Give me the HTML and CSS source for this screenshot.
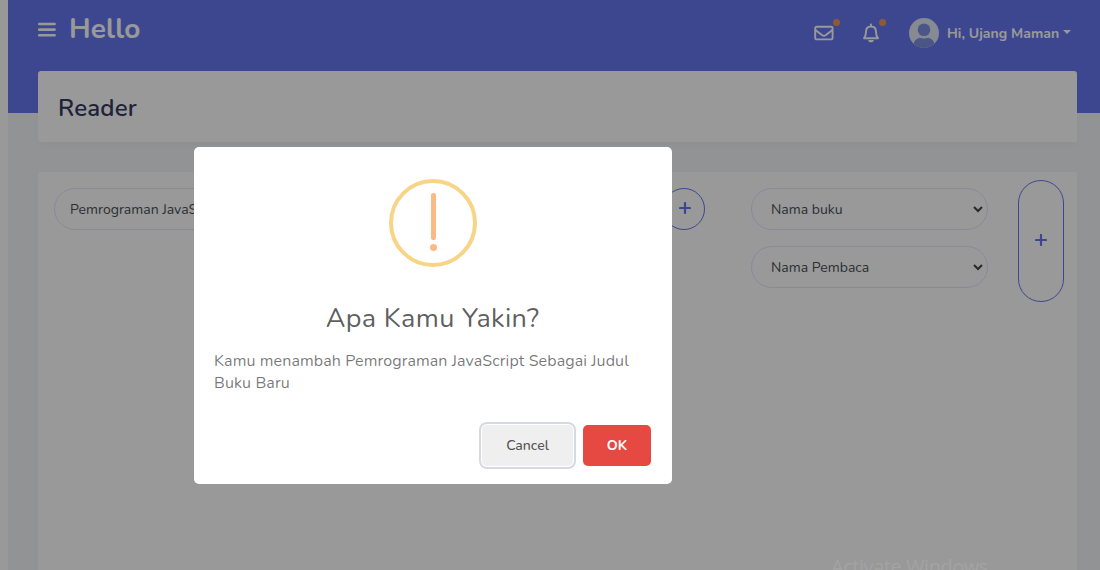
FILE: index.html
```html
<!DOCTYPE html>
<html lang="id">
<head>
<meta charset="utf-8">
<title>Reader</title>
<link rel="stylesheet" href="styles.css">
</head>
<body>
<div class="app">
  <header class="navbar">
    <svg class="menu" viewBox="0 0 18 16" width="18" height="16"><path d="M1.200 2h15.400M1.200 7.600h15.400M1.200 13.200h15.400" stroke="#fff" stroke-width="2.600" stroke-linecap="round"/></svg>
    <h1 class="brand"><span>Hello</span></h1>
    <nav class="tools">
      <span class="tool mail">
        <svg viewBox="0 0 20 16" width="20" height="16" fill="none" stroke="#fff" stroke-width="1.9" stroke-linejoin="round"><rect x="1.200" y="1.800" width="17.400" height="12.600" rx="1.300"/><path d="M1.400 5l6.500 5.100q2 1.500 4 0L18.400 5"/></svg>
        <i class="dot"></i>
      </span>
      <span class="tool bell">
        <svg viewBox="0 0 18 20" width="18" height="20"><path d="M2 15.200h14c-1.600-1.600-2-3.200-2-6.400 0-3.200-1.900-5.300-5-5.300S4 5.600 4 8.800c0 3.200-.4 4.800-2 6.400z" fill="none" stroke="#fff" stroke-width="1.900" stroke-linejoin="round"/><path d="M9 1.600v1.600" stroke="#fff" stroke-width="2" stroke-linecap="round"/><path d="M6.300 17h5.400a2.700 2.300 0 0 1-5.400 0z" fill="#fff"/></svg>
        <i class="dot"></i>
      </span>
      <svg class="avatar" viewBox="0 0 30 30" width="30" height="30"><defs><clipPath id="round"><circle cx="15" cy="15" r="15"/></clipPath></defs><g clip-path="url(#round)"><path fill="#dfe7f6" d="M0 0h30v30H0z"/><path fill="#7a8fe0" d="M4.500 30v-4q1-5 6-6.300 4.500 1.600 9 0 5 1.300 6 6.300v4z"/><circle cx="15" cy="11.700" r="7.500" fill="#dfe7f6"/><circle cx="15" cy="11.700" r="6.300" fill="#7a8fe0"/></g></svg>
      <span class="user">Hi, Ujang Maman</span>
      <i class="caret"></i>
    </nav>
  </header>
  <main class="content">
    <section class="card heading"><h2>Reader</h2></section>
    <section class="card forms">
      <div class="field title-field">Pemrograman JavaScript</div>
      <div class="add add-title"><svg viewBox="0 0 12 12" width="12" height="12"><path d="M6 1v10M1 6h10" stroke="#6777ef" stroke-width="2.200" stroke-linecap="round"/></svg></div>
      <div class="selects">
        <div class="field select"><span class="book">Nama buku</span><svg viewBox="0 0 10 7" width="10" height="7"><path d="M1 1l4 4 4-4" fill="none" stroke="#444" stroke-width="2"/></svg></div>
        <div class="field select"><span class="person">Nama Pembaca</span><svg viewBox="0 0 10 7" width="10" height="7"><path d="M1 1l4 4 4-4" fill="none" stroke="#444" stroke-width="2"/></svg></div>
      </div>
      <div class="add add-reader"><svg viewBox="0 0 12 12" width="12" height="12"><path d="M6 1v10M1 6h10" stroke="#6777ef" stroke-width="2.200" stroke-linecap="round"/></svg></div>
    </section>
  </main>
</div>
<div class="overlay">
  <div class="modal">
    <div class="warning"><i class="bar"></i><i class="point"></i></div>
    <h3>Apa Kamu Yakin?</h3>
    <p>Kamu menambah Pemrograman JavaScript Sebagai Judul<br>Buku Baru</p>
    <div class="actions"><button class="cancel">Cancel</button><button class="ok">OK</button></div>
  </div>
</div>
<div class="watermark">Activate Windows</div>
</body>
</html>
```
FILE: styles.css
```css
* { box-sizing: border-box; }
body { margin: 0; height: 570px; overflow: hidden; background: #fff; font-family: Nunito, Lato, sans-serif; font-size: 14px; color: #495057; }
h1, h2, h3, p { margin: 0; }
svg, i { display: block; flex: none; }
.app { height: 570px; margin-left: 8px; padding: 0 23px 0 30px; background: linear-gradient(#6777ef 113px, #f4f6f9 113px); display: flex; flex-direction: column; overflow: hidden; }
.navbar { height: 71px; flex: none; display: flex; align-items: flex-start; color: #fff; }
.menu { margin-top: 22px; }
.brand { margin: 11px 0 0 13px; font-size: 28px; line-height: 36px; font-weight: 700; letter-spacing: .15px; }
.tools { margin: 18px 6px 0 auto; height: 30px; display: flex; align-items: center; }
.tool { position: relative; }
.bell { margin-left: 28px; }
.dot { position: absolute; width: 7px; height: 7px; border-radius: 50%; background: #e89a58; }
.mail .dot { left: 19px; top: -6px; }
.bell .dot { left: 17px; top: -4px; }
.avatar { margin-left: 29px; }
.user { margin-left: 8px; font-weight: 700; white-space: nowrap; width: 112px; letter-spacing: .03px; }
.caret { margin: -2px 0 0 4px; border: 4px solid transparent; border-top-color: #fff; border-bottom: 0; }
.content { display: flex; flex-direction: column; gap: 30px; }
.card { background: #fff; border-radius: 3px; box-shadow: 0 4px 8px rgba(0,0,0,.03); }
.heading { height: 71px; padding: 19px 20px; }
.heading h2 { font-size: 24px; line-height: 36px; font-weight: 600; letter-spacing: .2px; color: #34395e; }
.forms { height: 420px; padding: 8px 13px 0 16px; display: flex; align-items: flex-start; }
.field { height: 42px; border: 1px solid #e4e6fc; border-radius: 21px; display: flex; align-items: center; white-space: nowrap; }
.title-field { width: 580px; margin-top: 8px; padding-left: 15px; }
.add { border: 1px solid #6777ef; display: flex; align-items: center; justify-content: center; padding-bottom: 2px; }
.add-title { width: 42px; height: 42px; border-radius: 21px; margin: 8px 0 0 29px; padding-left: 1px; }
.selects { width: 237px; margin: 8px 0 0 46px; display: grid; gap: 16px; }
.select { justify-content: space-between; padding: 0 4px 0 19px; }
.add-reader { width: 46px; height: 122px; margin-left: 30px; border-radius: 23px; }
.overlay { position: absolute; inset: 0; background: rgba(0,0,0,.4); padding: 147px 0 0 194px; }
.modal { width: 478px; height: 337px; padding: 32px 21px 18px 20px; background: #fff; border-radius: 5px; display: flex; flex-direction: column; }
.warning { width: 88px; height: 88px; margin-left: 175px; flex: none; border: 4px solid #f8d486; border-radius: 50%; display: flex; flex-direction: column; align-items: center; padding-top: 10px; gap: 4px; }
.bar { width: 5px; height: 47px; border-radius: 2px; background: #f8bb86; }
.point { width: 7px; height: 7px; border-radius: 50%; background: #f8bb86; }
.modal h3 { margin-top: 34px; text-align: center; font-size: 27px; line-height: 36px; font-weight: 400; letter-spacing: .36px; color: rgba(0,0,0,.65); white-space: nowrap; }
.modal p { margin-top: 13px; font-size: 16px; line-height: 22px; letter-spacing: .1px; color: rgba(0,0,0,.54); white-space: nowrap; }
.actions { margin: auto 0 0; display: flex; justify-content: flex-end; gap: 10px; }
.actions button { height: 41px; border: 0; border-radius: 5px; font: 500 14px Nunito, Lato, sans-serif; padding: 0; }
.cancel { width: 91px; background: #efefef; color: #555; box-shadow: 0 0 0 1px #fff, 0 0 0 3px #d5dae0; }
.actions .ok { width: 68px; background: #e64942; color: #fff; font-weight: 700; }
.watermark { position: absolute; left: 831px; top: 553px; font: 20px/28px "Open Sans", sans-serif; letter-spacing: -.45px; color: #a3a3a3; white-space: nowrap; }
```
